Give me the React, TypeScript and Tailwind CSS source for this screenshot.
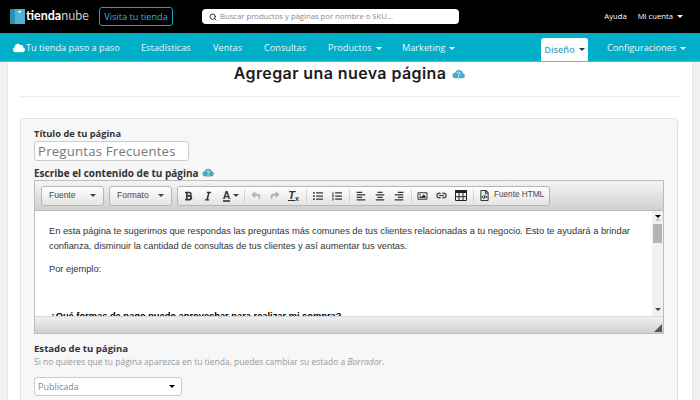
import React from 'react';
import { Search, Link2 } from 'lucide-react';
import {
  FaCloud, FaBold, FaItalic, FaReply, FaShare, FaListUl, FaListOl,
  FaAlignLeft, FaAlignCenter, FaAlignRight, FaRegImage, FaRegFileCode,
} from 'react-icons/fa';

function Caret({ className = 'border-t-white' }: { className?: string }) {
  return <span className={`inline-block w-0 h-0 border-x-[3px] border-x-transparent border-t-[3px] ${className}`} />;
}

function HelpCloud({ className = '' }: { className?: string }) {
  return (
    <svg viewBox="0 0 24 18" className={className}>
      <path d="M6 17h13a5 5 0 0 0 1-9.8A8 8 0 0 0 5 6.5 5.3 5.3 0 0 0 6 17z" fill="#4ba9c4" />
      <path d="M9.5 8a2.6 2.6 0 1 1 4 2.2c-.9.6-1.4 1-1.4 2" fill="none" stroke="#fff" strokeWidth="1.7" />
      <rect x="11.1" y="13.4" width="2" height="2" fill="#fff" />
    </svg>
  );
}

function TableIcon() {
  return (
    <svg viewBox="0 0 12 11" className="w-[12px] h-[11px]">
      <rect x="0" y="0" width="12" height="3" fill="#222" />
      <path d="M.5 0v10.5h11V0M4 3v7.5M8 3v7.5M.5 6.7h11" fill="none" stroke="#222" strokeWidth="1" />
    </svg>
  );
}

const navItems = [
  { label: 'Estadísticas', w: 'w-[72px]' },
  { label: 'Ventas', w: 'w-[51px]' },
  { label: 'Consultas', w: 'w-[64px]' },
];

function ToolBtn({ children }: { children: React.ReactNode }) {
  return <span className="w-[19px] h-[18px] shrink-0 flex items-center justify-center text-[#333]">{children}</span>;
}

function Sep() {
  return <span className="w-px h-[14px] bg-[#d4d4d4] ml-[2.5px] mr-[1.5px] shrink-0" />;
}

export default function App() {
  return (
    <div className="w-[700px] h-[400px] overflow-hidden bg-[#f1f1f1] font-['Open_Sans',sans-serif]">
      <header className="h-[33px] bg-black flex items-center pl-[10px] pr-[17px] whitespace-nowrap">
        <svg viewBox="0 0 15 16" className="w-[15px] h-[16px] mb-[1px] shrink-0">
          <path d="M0 1h15v15H0z" fill="#4fb3cf" />
          <path d="M0 1l5 0v15H0z" fill="#2d8fae" />
          <rect x="8" y="3" width="3" height="1.5" fill="#fff" />
        </svg>
        <span className="ml-[1px] text-[12.5px] leading-none text-white font-bold font-['Lato',sans-serif] w-[63px]">
          tienda<span className="font-normal text-[#c9c9c9]">nube</span>
        </span>
        <a className="ml-[10px] w-[74px] h-[19px] border border-[#18a5bd] rounded-[3px] text-[#2cb6cf] text-[9.2px] flex items-center justify-center">
          Visita tu tienda
        </a>
        <div className="ml-[29px] w-[257px] h-[15px] bg-white rounded-[4px] flex items-center pl-[7px]">
          <Search className="w-[8px] h-[8px] text-[#333]" strokeWidth={3} />
          <span className="ml-[3px] text-[7.7px] text-[#8a8a8a]">Buscar productos y páginas por nombre o SKU...</span>
        </div>
        <span className="ml-auto text-[7.7px] text-white">Ayuda</span>
        <span className="ml-[11px] text-[7.7px] text-white flex items-center gap-[4px]">
          Mi cuenta <Caret />
        </span>
      </header>

      <nav className="h-[29px] bg-[#00aec8] border-b border-[#3fc3d8] flex items-end pl-[13px] text-[9.2px] text-[#e6f8fb] whitespace-nowrap">
        <div className="h-full flex items-center w-[128px] pt-[2px]">
          <FaCloud className="w-[12px] h-[12px] text-white" />
          <span className="ml-px">Tu tienda paso a paso</span>
        </div>
        {navItems.map((n) => (
          <div key={n.label} className={`h-full flex items-center pt-[2px] ${n.w}`}>{n.label}</div>
        ))}
        <div className="h-full flex items-center pt-[2px] gap-[4px] w-[74px]">Productos <Caret /></div>
        <div className="h-full flex items-center pt-[2px] gap-[4px] w-[139px]">Marketing <Caret /></div>
        <div className="h-[23px] w-[47px] bg-white rounded-t-[3px] flex items-center justify-center gap-[4px] text-[#4ea7c0] font-semibold">
          Diseño <Caret className="border-t-[#143a55]" />
        </div>
        <div className="h-full flex items-center pt-[2px] gap-[4px] ml-[19px]">Configuraciones <Caret /></div>
      </nav>

      <main className="ml-[7px] w-[686px] h-[338px] bg-white border-x border-[#e3e3e3] px-[12px] overflow-hidden">
        <div className="h-[35px] border-b border-[#eee] flex items-start justify-center">
          <h1 className="text-[16px] leading-[22px] font-semibold text-[#1c1c1c] font-['Inter',sans-serif] tracking-[0.4px] -ml-px">Agregar una nueva página</h1>
          <HelpCloud className="w-[13px] h-[10px] ml-[6px] mt-[7px]" />
        </div>

        <section className="mt-[21px] w-[658px] h-[300px] bg-[#f7f7f7] border border-[#e3e3e3] rounded-[3px] pl-[13px] pt-[8px]">
          <label className="block text-[9.3px] leading-[13px] font-bold text-[#333]">Título de tu página</label>
          <div className="mt-[1px] w-[155px] h-[20px] bg-white border border-[#ccc] rounded-[3px] px-[3px] text-[13.2px] leading-[18px] text-[#777] tracking-[0.2px] whitespace-nowrap">Preguntas Frecuentes</div>
          <div className="mt-[6px] h-[13px] flex items-center text-[10px] font-bold text-[#333]">
            Escribe el contenido de tu página
            <HelpCloud className="w-[12px] h-[9px] ml-[3px] mb-[2px]" />
          </div>

          <div className="w-[630px] border border-[#bdbdbd] font-['Liberation_Sans',sans-serif]">
            <div className="h-[30px] bg-gradient-to-b from-[#f4f4f4] to-[#cfd1cf] flex items-center pl-[6px] gap-[5px] border-b border-[#bdbdbd]">
              <div className="w-[63px] h-[20px] bg-gradient-to-b from-white to-[#e4e4e4] border border-[#b6b6b6] rounded-[3px] flex items-center justify-between px-[7px] text-[8.5px] text-[#474747]">
                Fuente <Caret className="border-t-[#444]" />
              </div>
              <div className="w-[63px] h-[20px] bg-gradient-to-b from-white to-[#e4e4e4] border border-[#b6b6b6] rounded-[3px] flex items-center justify-between px-[7px] text-[8.5px] text-[#474747]">
                Formato <Caret className="border-t-[#444]" />
              </div>
              <div className="h-[20px] w-[373px] bg-gradient-to-b from-white to-[#e4e4e4] border border-[#b6b6b6] rounded-[3px] flex items-center pl-[1px]">
                <ToolBtn><FaBold className="w-[9px] h-[10px]" /></ToolBtn>
                <ToolBtn><FaItalic className="w-[8px] h-[10px]" /></ToolBtn>
                <ToolBtn><span className="text-[10.5px] font-bold border-b-2 border-[#555] leading-[10px]">A</span></ToolBtn>
                <Caret className="border-t-[#444] -ml-[3px] mr-[2px]" />
                <Sep />
                <ToolBtn><FaReply className="w-[10px] h-[9px] text-[#b4b4b4]" /></ToolBtn>
                <ToolBtn><FaShare className="w-[10px] h-[9px] text-[#b4b4b4]" /></ToolBtn>
                <ToolBtn>
                  <span className="text-[11px] font-bold italic border-b border-[#333] leading-[10px]">T</span>
                  <span className="text-[7px] font-bold leading-none mt-[5px]">x</span>
                </ToolBtn>
                <Sep />
                <ToolBtn><FaListUl className="w-[10px] h-[10px]" /></ToolBtn>
                <ToolBtn><FaListOl className="w-[10px] h-[10px]" /></ToolBtn>
                <Sep />
                <ToolBtn><FaAlignLeft className="w-[10px] h-[10px]" /></ToolBtn>
                <ToolBtn><FaAlignCenter className="w-[10px] h-[10px]" /></ToolBtn>
                <ToolBtn><FaAlignRight className="w-[10px] h-[10px]" /></ToolBtn>
                <Sep />
                <ToolBtn><FaRegImage className="w-[11px] h-[10px]" /></ToolBtn>
                <ToolBtn><Link2 className="w-[11px] h-[11px] text-[#555]" strokeWidth={3} /></ToolBtn>
                <ToolBtn><TableIcon /></ToolBtn>
                <Sep />
                <ToolBtn><FaRegFileCode className="w-[9px] h-[11px]" /></ToolBtn>
                <span className="text-[8.2px] text-[#474747] whitespace-nowrap">Fuente HTML</span>
              </div>
            </div>
            <div className="h-[105px] bg-white flex overflow-hidden">
              <div className="flex-1 pl-[14px] pr-[20px] pt-[13px] text-[9.3px] leading-[15px] text-[#333]">
                <p>En esta página te sugerimos que respondas las preguntas más comunes de tus clientes relacionadas a tu negocio. Esto te ayudará a brindar<br />confianza, disminuir la cantidad de consultas de tus clientes y así aumentar tus ventas.</p>
                <p className="mt-[8px]">Por ejemplo:</p>
                <p className="mt-[32px] ml-px font-bold text-black">¿Qué formas de pago puedo aprovechar para realizar mi compra?</p>
              </div>
              <div className="w-[11px] bg-[#f1f1f1] flex flex-col items-center py-[3px]">
                <Caret className="border-t-0 border-b-[3px] border-b-[#c4c4c4] mt-[1px]" />
                <div className="w-[9px] h-[19px] bg-[#b4b4b4] mt-[3px]" />
                <Caret className="border-t-[#444] mt-auto mb-[2px]" />
              </div>
            </div>
            <div className="h-[17px] bg-gradient-to-b from-[#f0f0f0] to-[#cfd1cf] border-t border-[#d8d8d8] flex justify-end items-end">
              <span className="w-0 h-0 border-l-[8px] border-l-transparent border-b-[8px] border-b-[#555] m-[1px]" />
            </div>
          </div>

          <div className="mt-[8px] text-[9.6px] leading-[13px] font-bold text-[#333]">Estado de tu página</div>
          <p className="mt-[1px] text-[8.5px] leading-[12px] text-[#999] whitespace-nowrap">Si no quieres que tu página aparezca en tu tienda, puedes cambiar su estado a <em>Borrador</em>.</p>
          <div className="mt-[9px] w-[148px] h-[19px] bg-white border border-[#ccc] rounded-[3px] flex items-center justify-between pl-[3px] pr-[6px] text-[9px] text-[#888]">
            Publicada <Caret className="border-t-black" />
          </div>
        </section>
      </main>
    </div>
  );
}
